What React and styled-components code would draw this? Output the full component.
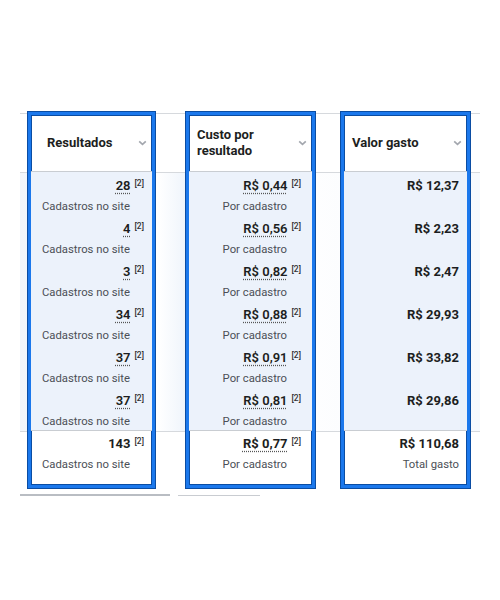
import React from 'react';
import styled, { createGlobalStyle } from 'styled-components';

const GlobalStyle = createGlobalStyle`
  html, body {
    margin: 0;
    padding: 0;
    background: #ffffff;
  }
  body {
    font-family: Roboto, "Liberation Sans", Arial, sans-serif;
    color: #1c1e21;
  }
`;

const columns = [
  {
    key: 'res',
    title: ['Resultados'],
    titlePad: 16,
    valuePad: 22,
    width: 127,
    rows: ['28', '4', '3', '34', '37', '37'],
    label: 'Cadastros no site',
    total: '143',
    totalLabel: 'Cadastros no site',
    dotted: true,
    bold: false,
  },
  {
    key: 'cost',
    title: ['Custo por', 'resultado'],
    titlePad: 8,
    valuePad: 25,
    width: 129,
    rows: ['R$ 0,44', 'R$ 0,56', 'R$ 0,82', 'R$ 0,88', 'R$ 0,91', 'R$ 0,81'],
    label: 'Por cadastro',
    total: 'R$ 0,77',
    totalLabel: 'Por cadastro',
    dotted: true,
    bold: false,
  },
  {
    key: 'spent',
    title: ['Valor gasto'],
    titlePad: 8,
    valuePad: 8,
    width: 129,
    rows: ['R$ 12,37', 'R$ 2,23', 'R$ 2,47', 'R$ 29,93', 'R$ 33,82', 'R$ 29,86'],
    label: null,
    total: 'R$ 110,68',
    totalLabel: 'Total gasto',
    dotted: false,
    bold: true,
  },
];

const Chevron = () => (
  <svg width="9" height="6" viewBox="0 0 9 6">
    <path d="M1.2 1.4 L4.5 4.4 L7.8 1.4" fill="none" stroke="#a3a7ae" strokeWidth="1.7" />
  </svg>
);

export default function App() {
  return (
    <>
      <GlobalStyle />
      <Board>
        {columns.map((col, i) => (
          <Panel key={col.key} $width={col.width} $gap={i === 0 ? 0 : i === 1 ? 31 : 26}>
            <Header $pad={col.titlePad}>
              <Title>
                {col.title.map((t) => (
                  <span key={t}>{t}</span>
                ))}
              </Title>
              <Chevron />
            </Header>
            <Body>
              {col.rows.map((v, r) => (
                <Row key={r} $pad={col.valuePad}>
                  <ValueLine>
                    <Value $dotted={col.dotted} $bold={col.bold}>{v}</Value>
                    {col.dotted && <Sup>[2]</Sup>}
                  </ValueLine>
                  {col.label && <Label>{col.label}</Label>}
                </Row>
              ))}
            </Body>
            <Footer $pad={col.valuePad}>
              <ValueLine>
                <Value $dotted={col.key === 'cost'} $bold>{col.total}</Value>
                {col.dotted && <Sup>[2]</Sup>}
              </ValueLine>
              <Label>{col.totalLabel}</Label>
            </Footer>
          </Panel>
        ))}
      </Board>
    </>
  );
}

const Board = styled.div`
  margin: 112px 20px 0 20px;
  padding: 0 0 12px 8px;
  display: flex;
  align-items: flex-start;
  background:
    linear-gradient(#d6d9dd, #d6d9dd) 0 1px / 100% 1px no-repeat,
    linear-gradient(#d6d9dd, #d6d9dd) 0 60px / 100% 1px no-repeat,
    linear-gradient(#d6d9dd, #d6d9dd) 0 319px / 100% 1px no-repeat,
    linear-gradient(#b9bdc3, #b9bdc3) 0 382px / 150px 2px no-repeat,
    linear-gradient(#c9ccd1, #c9ccd1) 158px 383px / 82px 1px no-repeat,
    linear-gradient(to right, #f2f6fb 0%, #ffffff 30%, #dfeaf8 42%, #ffffff 55%, #f6f9fd 100%) 0 61px / 100% 258px no-repeat,
    #ffffff;
`;

const Panel = styled.section`
  box-sizing: border-box;
  width: ${(p) => p.$width}px;
  margin-left: ${(p) => p.$gap}px;
  border: 3px solid #1b78ec;
  box-shadow: 0 0 0 1px #0b4da3, inset 0 0 0 1px #0b4da3;
  background: #ffffff;
  display: flex;
  flex-direction: column;
`;

const Header = styled.div`
  height: 56px;
  border-bottom: 1px solid #c9cdd2;
  display: flex;
  align-items: center;
  justify-content: space-between;
  padding: 0 5px 0 ${(p) => p.$pad}px;
`;

const Title = styled.div`
  display: flex;
  flex-direction: column;
  font-size: 13px;
  font-weight: 700;
  line-height: 16px;
  color: #1c1e21;
`;

const Body = styled.div`
  background: #ecf2fb;
  border-bottom: 1px solid #c9cdd2;
`;

const Row = styled.div`
  height: 43px;
  box-sizing: border-box;
  padding: 6px ${(p) => p.$pad}px 0 0;
  display: flex;
  flex-direction: column;
  align-items: flex-end;
`;

const Footer = styled.div`
  height: 54px;
  box-sizing: border-box;
  padding: 5px ${(p) => p.$pad}px 0 0;
  display: flex;
  flex-direction: column;
  align-items: flex-end;
`;

const ValueLine = styled.div`
  display: flex;
  align-items: flex-start;
  line-height: 16px;
  height: 16px;
`;

const Value = styled.span`
  font-size: 13px;
  font-weight: ${(p) => (p.$bold ? 700 : 600)};
  color: #1c1e21;
  text-decoration: ${(p) => (p.$dotted ? 'underline dotted #555' : 'none')};
  text-underline-offset: 3px;
`;

const Sup = styled.span`
  font-size: 8.5px;
  line-height: 10px;
  color: #333;
  margin-left: 4px;
  margin-right: -14px;
  font-weight: 500;
`;

const Label = styled.span`
  margin-top: 5px;
  font-size: 11.3px;
  line-height: 16px;
  color: #4b4f56;
  white-space: nowrap;
`;
